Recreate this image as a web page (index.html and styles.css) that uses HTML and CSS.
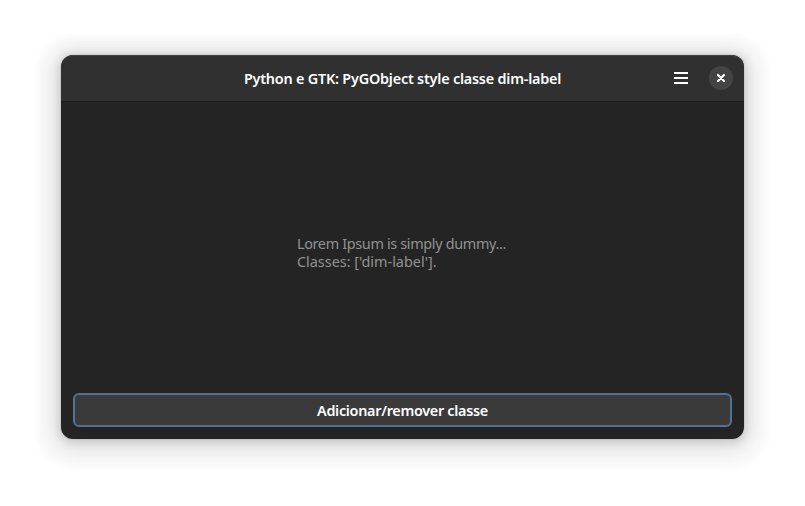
FILE: index.html
```html
<!DOCTYPE html>
<html lang="pt-BR">
<head>
<meta charset="utf-8">
<title>Python e GTK</title>
<link rel="stylesheet" href="styles.css">
</head>
<body>
<main class="window">
  <header class="headerbar">
    <h1 class="title">Python e GTK: PyGObject style classe dim-label</h1>
    <div class="controls">
      <button class="menu" aria-label="Menu"><svg width="16" height="16" viewBox="0 0 16 16"><path d="M1 2h14v2H1zM1 7h14v2H1zM1 12h14v2H1z" fill="#fff"/></svg></button>
      <button class="close" aria-label="Fechar"><svg width="16" height="16" viewBox="0 0 16 16"><path d="M5 5l6 6M11 5l-6 6" stroke="#fff" stroke-width="2.2" stroke-linecap="round"/></svg></button>
    </div>
  </header>
  <section class="content"><p class="dim-label">Lorem Ipsum is simply dummy...<br><span class="classes">Classes: ['dim-label'].</span></p></section>
  <footer class="footer"><button class="toggle">Adicionar/remover classe</button></footer>
</main>
</body>
</html>
```
FILE: styles.css
```css
* { box-sizing: border-box; }
body { margin: 0; padding: 55px 61px 67px; height: 506px; background: #fff; font-family: "Noto Sans", sans-serif; font-size: 14.667px; overflow: hidden; }
button { border: 0; padding: 0; font: inherit; color: inherit; background: none; }
svg { display: block; }
.window { display: flex; flex-direction: column; width: 683px; height: 384px; border-radius: 12px; overflow: hidden; background: #242424; color: #fff; box-shadow: 0 2px 8px 2px rgba(0,0,0,.13), 0 3px 20px 10px rgba(0,0,0,.08), 0 5px 8px 23px rgba(0,0,0,.025), 0 0 0 1px rgba(0,0,0,.05); }
.headerbar { display: grid; grid-template-columns: 1fr auto 1fr; align-items: center; height: 47px; flex: none; background: #303030; border-bottom: 1px solid #1e1e1e; box-shadow: inset 0 1px #434343; border-radius: 12px 12px 0 0; }
.title { grid-column: 2; margin: 0; font-size: 14.4px; font-weight: 650; letter-spacing: -.21px; white-space: nowrap; }
.controls { display: flex; justify-content: flex-end; align-items: center; gap: 20px; padding-right: 11px; }
.close { display: grid; place-items: center; width: 24px; height: 24px; border-radius: 50%; background: #444; }
.content { flex: 1; display: grid; place-items: center; padding: 11px 2px 0 0; }
.dim-label { margin: 0; color: #929292; font-size: 14.4px; letter-spacing: -.33px; line-height: 18px; }
.classes { letter-spacing: .01px; }
.footer { padding: 0 12px 12px; }
.toggle { display: block; width: 100%; height: 34px; border: 2px solid #557190; border-radius: 6px; background: #3a3a3a; font-size: 14.4px; font-weight: 650; letter-spacing: -.29px; }
```
